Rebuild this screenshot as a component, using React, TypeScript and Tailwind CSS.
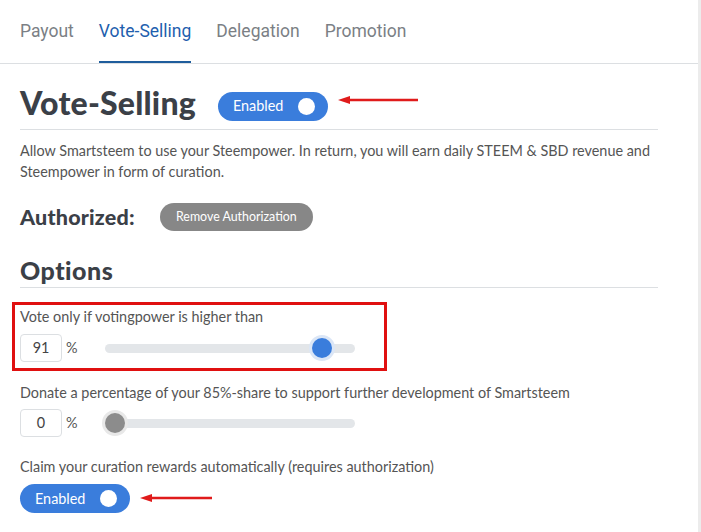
import React from "react";

function Toggle() {
  return (
    <div className="flex h-[29px] w-[110px] items-center justify-between rounded-full bg-[#3a7ddc] pl-[15px] pr-[13px]">
      <span className="text-[14.4px] text-white">Enabled</span>
      <span className="h-[17px] w-[17px] rounded-full bg-white" />
    </div>
  );
}

function Arrow({ width }: { width: number }) {
  return (
    <svg width={width} height="10" viewBox={`0 0 ${width} 10`}>
      <path d={`M10 5 H${width}`} stroke="#e01b1b" strokeWidth="2.5" />
      <path d="M0 5 L12 1 L12 9 Z" fill="#e01b1b" />
    </svg>
  );
}

function SliderRow({ value, pct, thumb }: { value: string; pct: number; thumb: string }) {
  return (
    <div className="flex items-center">
      <div className="flex h-[28px] w-[42px] items-center justify-center rounded border border-[#dcdfe2] text-[14.4px] text-[#444]">
        {value}
      </div>
      <span className="ml-[4px] text-[14.4px] text-[#555]">%</span>
      <div className="relative ml-[27px] h-[9px] w-[250px] rounded-full bg-[#e3e6e9]">
        <span
          className={`absolute top-1/2 h-[20px] w-[20px] -translate-x-1/2 -translate-y-1/2 rounded-full ${thumb}`}
          style={{ left: `${pct}%` }}
        />
      </div>
    </div>
  );
}

export default function App() {
  const tabs = ["Payout", "Vote-Selling", "Delegation", "Promotion"];
  return (
    <div className="h-[532px] w-[701px] overflow-hidden bg-white font-['Lato',sans-serif] text-[#555]">
      <div className="flex h-full">
        <div className="w-[698px]">
          <div className="flex h-[64px] gap-[25px] border-b border-[#dcdfe2] px-[20px] font-['Roboto',sans-serif] text-[17.5px]">
            {tabs.map((t) => (
              <div
                key={t}
                className={
                  t === "Vote-Selling"
                    ? "flex items-center border-b-2 border-[#1f5d9c] pt-[2px] text-[#1f5fae]"
                    : "flex items-center text-[#7b7f85]"
                }
              >
                {t}
              </div>
            ))}
          </div>

          <div className="px-[20px]">
            <div className="mr-[20px] mt-[24px] flex h-[42px] items-center border-b border-[#dcdfe2] pb-[5px]">
              <h1 className="mb-[7px] text-[32px] font-black leading-[36px] tracking-[0.2px] text-[#3b4047]">
                Vote-Selling
              </h1>
              <div className="ml-[22px]">
                <Toggle />
              </div>
              <div className="-mt-[12px] ml-[10px]">
                <Arrow width={80} />
              </div>
            </div>

            <p className="mt-[10px] text-[14.4px] leading-[21px]">
              Allow Smartsteem to use your Steempower. In return, you will earn daily STEEM &amp; SBD revenue and
              Steempower in form of curation.
            </p>

            <div className="mt-[21px] flex h-[28px] items-center">
              <span className="w-[140px] text-[21.5px] font-black tracking-[0.2px] text-[#3b4047]">Authorized:</span>
              <button className="h-[28px] rounded-full bg-[#878787] px-[16px] text-[12.4px] text-white">
                Remove Authorization
              </button>
            </div>

            <div className="mr-[20px] mt-[24px] border-b border-[#dcdfe2] pb-[2px]">
              <h2 className="text-[25px] font-black leading-[30px] tracking-[0.5px] text-[#3b4047]">Options</h2>
            </div>

            <div className="-ml-[8px] mt-[14px] w-[375px] border-[3px] border-[#e01010] pb-[6px] pl-[5px] pt-[2px]">
              <p className="text-[14.4px] leading-[20px]">Vote only if votingpower is higher than</p>
              <div className="mt-[7px]">
                <SliderRow value="91" pct={87} thumb="bg-[#3a7ddc] ring-[3px] ring-[#dbe6f6]" />
              </div>
            </div>

            <p className="mt-[12px] text-[14.4px] leading-[20px]">
              Donate a percentage of your 85%-share to support further development of Smartsteem
            </p>
            <div className="mt-[6px]">
              <SliderRow value="0" pct={4} thumb="bg-[#8c8c8c] ring-[3px] ring-[#e8e8e8]" />
            </div>

            <p className="mt-[20px] text-[14.4px] leading-[20px]">
              Claim your curation rewards automatically (requires authorization)
            </p>
            <div className="mt-[7px] flex items-center">
              <Toggle />
              <div className="-mt-[2px] ml-[10px]">
                <Arrow width={72} />
              </div>
            </div>
          </div>
        </div>
        <div className="w-[3px] bg-[#ececec]" />
      </div>
    </div>
  );
}
